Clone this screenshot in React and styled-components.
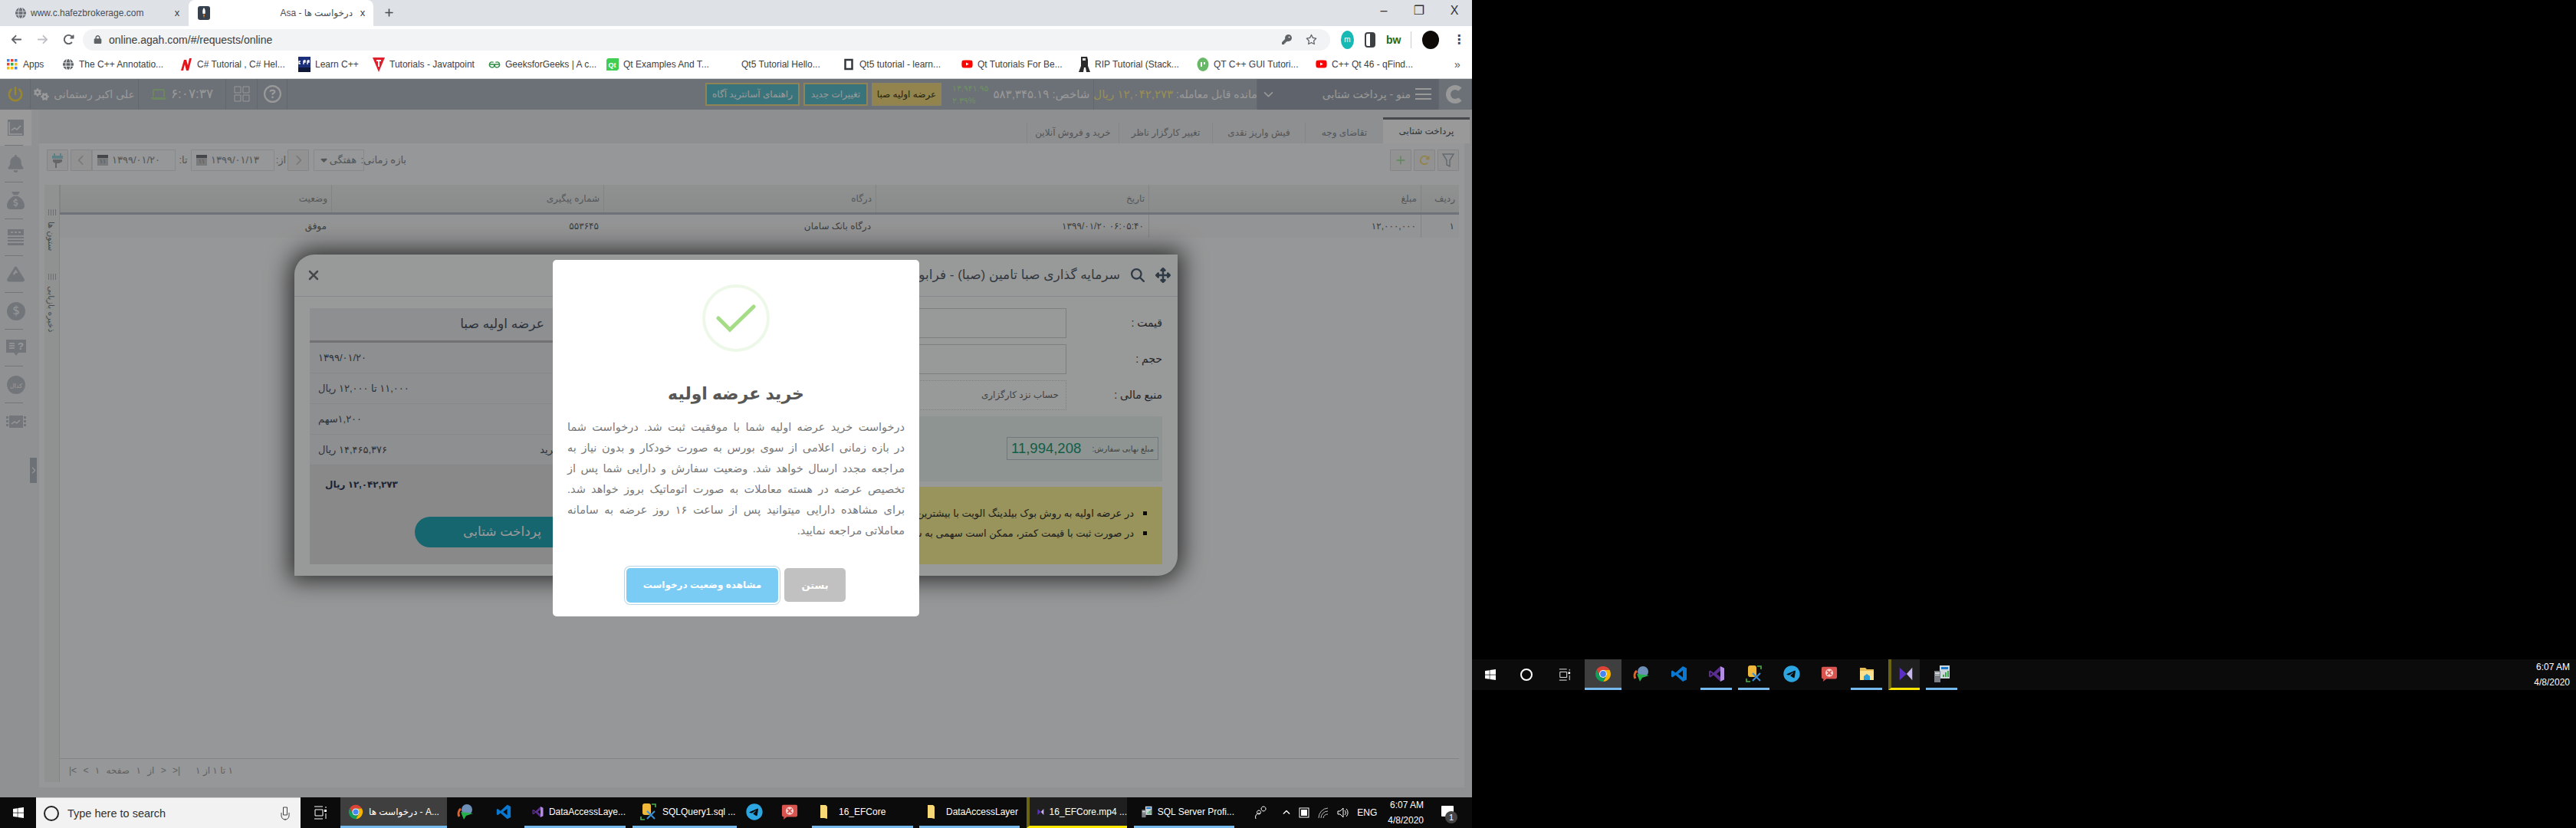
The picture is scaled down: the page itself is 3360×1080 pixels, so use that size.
import React from 'react';
import styled, {createGlobalStyle} from 'styled-components';
import {FaWindows, FaTelegram, FaBell, FaMountain, FaSackDollar, FaMagnifyingGlass, FaUpDownLeftRight, FaXmark, FaRegStar, FaKey, FaLock, FaArrowLeft, FaArrowRight, FaRotateRight, FaGlobe, FaYoutube, FaPlus, FaChevronLeft, FaChevronRight, FaChevronDown, FaChevronUp, FaPowerOff, FaGears, FaRegCircleQuestion, FaLaptop, FaCaretDown} from 'react-icons/fa6';

const GlobalStyle = createGlobalStyle`
  html, body { margin: 0; padding: 0; background: #000; overflow: hidden; }
  body { font-family: "Liberation Sans", "DejaVu Sans", sans-serif; }
  * { box-sizing: border-box; }
`;

/* ---- small drawings ---- */
const ChromeLogo = ({size = 20}) => (
    <svg width={size} height={size} viewBox="0 0 24 24">
        <path fill="#db4437" d="M12 7h8.66A10 10 0 0 0 3.34 7l4.33 7.5A5 5 0 0 1 12 7z"/>
        <path fill="#f4b400" d="M16.33 14.5A5 5 0 0 0 12 7h8.66A10 10 0 0 1 12 22z"/>
        <path fill="#0f9d58" d="M7.67 14.5L3.34 7A10 10 0 0 0 12 22l4.33-7.5a5 5 0 0 1-8.66 0z"/>
        <circle cx="12" cy="12" r="5" fill="#fff"/>
        <circle cx="12" cy="12" r="3.9" fill="#4285f4"/>
    </svg>
);
const VsLogo = ({size = 22}) => (
    <svg width={size} height={size} viewBox="0 0 24 24">
        <path fill="#5c2d91" d="M17 2L8 10.5 4 7.5 2 8.5v7l2 1 4-3 9 8.5z"/>
        <path fill="#b18de0" d="M17 2l5 2.5v15L17 22z"/>
        <path fill="#0b0b0b" d="M4 10l2.4 2L4 14zM17 8l-5 4 5 4z"/>
    </svg>
);
const VscodeLogo = ({size = 22}) => (
    <svg width={size} height={size} viewBox="0 0 24 24">
        <path fill="#0a78d1" d="M17 2l5 2.4v15.2L17 22 7.5 13.5l-4 3L2 15.5v-7l1.5-1 4 3zM17 7.5L11 12l6 4.5z"/>
    </svg>
);
const PlayerLogo = () => (
    <svg width="22" height="22" viewBox="0 0 24 24">
        <path fill="#5b2fc4" d="M3 3l10 9-10 9z"/>
        <path fill="#c9b6ee" d="M21 3l-8 9 8 9z"/>
    </svg>
);
const IdmLogo = () => (
    <svg width="24" height="24" viewBox="0 0 24 24">
        <path fill="none" stroke="#e2632a" strokeWidth="3" d="M4 18a8 8 0 0 1 2-10"/>
        <circle cx="14" cy="9" r="7" fill="#6d8fb8"/>
        <path fill="#26b04b" d="M6 12l16 2-9 3-3 5z"/>
    </svg>
);
const SsmsLogo = () => (
    <svg width="24" height="24" viewBox="0 0 24 24">
        <rect x="4" y="1" width="11" height="15" rx="3" fill="#f0b83a"/>
        <path stroke="#4caf50" strokeWidth="1.6" fill="none" d="M16 2h5v4M2 18v4h5"/>
        <path stroke="#3a8fd8" strokeWidth="2" d="M10 21l10-10M10 11l10 10"/>
    </svg>
);
const RedAppLogo = () => (
    <svg width="22" height="22" viewBox="0 0 24 24">
        <path fill="#d9534f" d="M3 2h18a2 2 0 0 1 2 2v13a2 2 0 0 1-2 2H8l-5 4 1-4H3a2 2 0 0 1-2-2V4a2 2 0 0 1 2-2z"/>
        <circle cx="12" cy="10.5" r="5.5" fill="#f6d5d3"/>
        <path stroke="#d9534f" strokeWidth="2" d="M9 7.500l6 6M15 7.500l-6 6"/>
    </svg>
);
const FolderLogo = ({tall}) => (
    <svg width="20" height="22" viewBox="0 0 20 22">
        {tall
            ? <path fill="#f8d775" d="M2 2h7l2 2v16l-4-1H2z"/>
            : <><path fill="#e8bd55" d="M1 3h7l2 2h9v14H1z"/><path fill="#fbe08e" d="M1 7h18v12H1z"/><path fill="#2c9fd9" d="M6 19v-5l4-3 4 3v5z"/></>}
    </svg>
);
const ProfilerLogo = () => (
    <svg width="24" height="24" viewBox="0 0 24 24">
        <rect x="9" y="1" width="13" height="17" fill="#cfd6dc"/>
        <path fill="#1e78c8" d="M11 3h9v3h-9z"/>
        <path fill="#3fa34d" d="M13 16v-3h2v3zM16 16v-6h2v6zM19 16V8h2v8z"/>
        <rect x="2" y="8" width="8" height="15" fill="#7a7f85"/>
        <path fill="#d8dcdf" d="M3 10h6v2H3zM3 13h6v1H3z"/>
    </svg>
);
const RocketIcon = () => (
    <svg width="16" height="18" viewBox="0 0 16 18">
        <rect width="16" height="18" rx="3" fill="#36414d"/>
        <path fill="#fff" d="M8 2c2 2 2 5 1.500 8h-3C6 7 6 4 8 2z"/>
        <path fill="#f08a24" d="M7 11h2l-1 5z"/>
    </svg>
);
const GridDots = () => (
    <svg width="14" height="14" viewBox="0 0 14 14">
        {[0, 5, 10].flatMap(y => [0, 5, 10].map(x => (
            <rect key={x + '-' + y} x={x} y={y} width="3.500" height="3.500"
                  fill={y === 0 ? (x === 5 ? '#ea4335' : '#4285f4') : y === 5 ? (x === 0 ? '#ea4335' : x === 5 ? '#34a853' : '#fbbc05') : (x === 10 ? '#4285f4' : '#fbbc05')}/>
        )))}
    </svg>
);
const CSharpIcon = () => (
    <svg width="16" height="18" viewBox="0 0 16 18"><path fill="#e3141c" d="M1 17L5 3h3l2 7 2-9h3l-4 16H8L6 9l-2 8z"/></svg>
);
const CppIcon = () => (
    <svg width="16" height="20" viewBox="0 0 16 20"><rect width="16" height="20" fill="#1b2f7a"/><rect y="14" width="16" height="6" fill="#10183a"/><path stroke="#fff" strokeWidth="1.400" fill="none" d="M3 6H1v3h2M7 5v5M7 5h2v2H7M12 5v5M12 5h2v2h-2"/></svg>
);
const JavatIcon = () => (
    <svg width="16" height="20" viewBox="0 0 16 20"><path fill="#e0202c" d="M0 1h16L8 20z"/><path fill="#fff" d="M5 4h6v2H9v7H7V6H5z"/></svg>
);
const GfgIcon = () => (
    <svg width="18" height="14" viewBox="0 0 18 14"><path fill="none" stroke="#2f8d46" strokeWidth="1.500" d="M9 7H1.500a4 4 0 0 1 6-3M9 7h7.500a4 4 0 0 0-6-3M1.500 7a4 4 0 0 0 7 3V7M16.500 7a4 4 0 0 1-7 3V7"/></svg>
);
const QtIcon = () => (
    <svg width="16" height="16" viewBox="0 0 16 16"><path fill="#41cd52" d="M2 0h14v14l-2 2H0V2z"/><text x="2.500" y="11.500" fontSize="9" fontFamily="Liberation Sans" fill="#fff" fontWeight="700">Qt</text></svg>
);
const BlackSquare = () => (
    <svg width="12" height="16" viewBox="0 0 12 16"><rect x="1.500" y="2" width="9" height="12" fill="#fff" stroke="#33383e" strokeWidth="2.500"/></svg>
);
const RipIcon = () => (
    <svg width="16" height="22" viewBox="0 0 16 22"><path fill="#2b2b2b" d="M4 1h8l1 4v8l3 8h-5l-1-6H8l-1 6H1l3-8V5z"/><path fill="#ddd" d="M6 3h4v3H6z"/></svg>
);
const QtGuiIcon = () => (
    <svg width="16" height="18" viewBox="0 0 16 18"><ellipse cx="8" cy="9" rx="7.500" ry="9" fill="#69b868"/><path fill="#fff" d="M5 6h2v6H5zM9 6h2v3H9z"/></svg>
);
const TrendIcon = () => (
    <svg width="21" height="21" viewBox="0 0 21 21"><rect width="21" height="21" fill="#bfc5cd"/><path fill="none" stroke="#fff" strokeWidth="1.500" d="M2 3v16h17M5 14l4-3 3 2 5-5"/></svg>
);
const ListIcon = () => (
    <svg width="21" height="21" viewBox="0 0 21 21"><rect width="21" height="21" fill="#bfc5cd"/><path stroke="#fff" strokeWidth="1.500" d="M0 9h21M0 13h21M0 17h21M4 4h3M9 4h3M14 4h3"/></svg>
);
const CoinIcon = ({label}) => (
    <svg width="24" height="24" viewBox="0 0 24 24">
        <circle cx="12" cy="12" r="12" fill="#bfc5cd"/>
        <text x="12" y="16" textAnchor="middle" fontSize={label.length > 1 ? 8 : 15} fontFamily="DejaVu Sans" fill="#fff">{label}</text>
    </svg>
);
const QuestionIcon = () => (
    <svg width="26" height="21" viewBox="0 0 26 21"><path fill="#bfc5cd" d="M0 0h26v17H16l-3 4-3-4H0z"/><path stroke="#fff" strokeWidth="1.300" d="M4 5h7M4 8h7M4 11h7"/><text x="15" y="13" fontSize="13" fontFamily="Liberation Sans" fontWeight="700" fill="#fff">?</text></svg>
);
const FilmIcon = () => (
    <svg width="26" height="16" viewBox="0 0 26 16"><rect x="4" width="18" height="16" fill="#bfc5cd"/><path fill="#bfc5cd" d="M0 1h3v3H0zM0 6h3v3H0zM0 11h3v3H0zM23 1h3v3h-3zM23 6h3v3h-3zM23 11h3v3h-3z"/><path fill="none" stroke="#fff" strokeWidth="1.300" d="M7 11l4-3 3 2 4-4"/></svg>
);
const PlugIcon = () => (
    <svg width="14" height="22" viewBox="0 0 14 22"><path fill="#9ed8de" d="M2 2h2v3h6V2h2v3h2v4H0V5h2z"/><path fill="#a8abae" d="M1 10h12v3l-4 2H6v6H4v-6l-3-2z"/></svg>
);
const FunnelIcon = () => (
    <svg width="16" height="18" viewBox="0 0 16 18"><path fill="none" stroke="#a8b0bb" strokeWidth="1.500" d="M1 1h14L10 9v8l-4-2V9z"/></svg>
);
const TaskViewIcon = ({size = 18}) => (
    <svg width={size} height={size} viewBox="0 0 18 18"><path fill="none" stroke="#fff" d="M1 1h11M1 17h11M2 5h10v8H2z"/><path fill="#fff" d="M14 5h3v3h-3z"/><path stroke="#fff" d="M16 10v7M16 1v2"/></svg>
);

/* ---- chrome ---- */
const Browser = styled.div`
  width: 1920px;
  height: 1080px;
  display: flex;
  flex-direction: column;
  flex-shrink: 0;
`;
const TabStrip = styled.div`
  height: 34px;
  background: #dee1e6;
  display: flex;
  align-items: stretch;
  color: #3c4043;
`;
const Tab = styled.div`
  width: ${p => p.$w}px;
  background: ${p => p.$active ? '#fff' : 'transparent'};
  border-radius: 8px 8px 0 0;
  display: flex;
  align-items: center;
  gap: 6px;
  padding: 0 7px 0 ${p => p.$active ? 12 : 20}px;
  font-size: 12px;
  margin-left: ${p => p.$active ? 1 : 0}px;
`;
const TabTitle = styled.span`
  flex: 1;
  text-align: ${p => p.$end ? 'right' : 'left'};
  white-space: nowrap;
  color: #4a4d52;
`;
const TabClose = styled.span`
  font-size: 13px;
  color: #3c4043;
  width: 14px;
  text-align: center;
`;
const NewTab = styled.div`
  width: 40px;
  display: flex;
  align-items: center;
  justify-content: center;
  color: #4a4d52;
  font-size: 13px;
`;
const WindowButtons = styled.div`
  margin-left: auto;
  display: flex;
  align-items: flex-start;
  padding: 6px 15px 0 0;
  gap: 30px;
  font-size: 16px;
  color: #333;
`;
const WinGlyph = styled.span`
  width: 16px;
  text-align: center;
  line-height: 16px;
`;
const AddressRow = styled.div`
  height: 32px;
  background: #fff;
  display: flex;
  align-items: flex-end;
  padding-left: 14px;
  color: #5f6368;
`;
const NavIcons = styled.div`
  display: flex;
  align-items: center;
  gap: 19px;
  height: 28px;
  width: 94px;
  font-size: 15px;
`;
const Omnibox = styled.div`
  width: 1627px;
  height: 28px;
  background: #f1f3f4;
  border-radius: 14px;
  display: flex;
  align-items: center;
  padding: 0 17px 0 14px;
  gap: 9px;
  font-size: 14px;
  color: #3c4043;
`;
const UrlText = styled.span`
  flex: 1;
  white-space: nowrap;
`;
const OmniTools = styled.div`
  display: flex;
  align-items: center;
  gap: 18px;
  color: #5f6368;
  font-size: 14px;
`;
const ExtensionTools = styled.div`
  display: flex;
  align-items: center;
  height: 28px;
  padding-left: 14px;
  gap: 14px;
`;
const ExtM = styled.span`
  width: 17px;
  height: 24px;
  border-radius: 50%;
  background: #17b9b4;
  color: #fff;
  font-size: 10px;
  display: flex;
  align-items: center;
  justify-content: center;
`;
const ExtBox = styled.span`
  width: 14px;
  height: 20px;
  border: 2px solid #3c4043;
  border-radius: 4px;
  background: linear-gradient(90deg, #fff 50%, #3c4043 50%);
`;
const ExtBw = styled.span`
  font-size: 14px;
  font-weight: 700;
  color: #1c6b16;
  width: 18px;
`;
const ExtSeparator = styled.span`
  width: 1px;
  height: 22px;
  background: #ccc;
`;
const Avatar = styled.span`
  width: 22px;
  height: 24px;
  border-radius: 50%;
  background: #0d0a08;
`;
const Dots = styled.span`
  font-size: 16px;
  font-weight: 700;
  color: #444;
  margin-left: 4px;
`;
const BookmarkBar = styled.div`
  height: 37px;
  background: #fff;
  border-bottom: 1px solid #d6d6d6;
  display: flex;
  align-items: center;
  padding-left: 8px;
  font-size: 12px;
  color: #3c4043;
`;
const Bookmark = styled.div`
  width: ${p => p.$w}px;
  display: flex;
  align-items: center;
  gap: 6px;
  overflow: hidden;
  white-space: nowrap;
`;
const BookmarkIcon = styled.span`
  width: 16px;
  height: 22px;
  display: flex;
  align-items: center;
  justify-content: center;
  flex-shrink: 0;
`;
const MoreBookmarks = styled.span`
  margin-left: 20px;
  font-size: 14px;
  color: #555;
`;

/* ---- page behind the dialogs ---- */
const AppArea = styled.div`
  position: relative;
  height: 938px;
  overflow: hidden;
  background: #f0f2f3;
  display: flex;
  flex-direction: column;
`;
const Backdrop = styled.div`
  position: absolute;
  inset: 0;
  background: rgba(0, 0, 0, .4);
  z-index: 2;
`;
const HeaderBar = styled.div`
  height: 40px;
  background: #b4bbc6;
  display: flex;
  align-items: stretch;
  color: #fff;
`;
const HeaderCell = styled.div`
  width: ${p => p.$w}px;
  display: flex;
  align-items: center;
  justify-content: ${p => p.$spread ? 'space-between' : 'center'};
  gap: 6px;
  padding: ${p => p.$spread ? '0 9px 0 8px' : '0'};
  border-right: 1px solid #a5acb8;
  font-size: ${p => p.$size || 14}px;
  background: ${p => p.$dark ? '#9ea7b4' : 'transparent'};
  white-space: nowrap;
`;
const HeaderSpacer = styled.div`
  flex: 1;
`;
const HeaderButtons = styled.div`
  display: flex;
  align-items: center;
  gap: 5px;
  margin-right: 6px;
`;
const NoticeButton = styled.div`
  width: ${p => p.$w}px;
  height: 30px;
  background: ${p => p.$gold ? '#f3dd7f' : '#5fc2d0'};
  border: 2px solid #f0dc90;
  font-size: 12px;
  color: ${p => p.$gold ? '#3f3a20' : '#fff'};
  display: flex;
  align-items: center;
  justify-content: center;
  white-space: nowrap;
  overflow: hidden;
`;
const IndexStack = styled.div`
  color: #b4f0a0;
  font-size: 11px;
  line-height: 16px;
  direction: ltr;
`;
const BalanceValue = styled.span`
  color: #ffee8a;
  font-size: 15px;
`;
const HamburgerLines = styled.span`
  width: 21px;
  height: 15px;
  border-top: 2px solid #fff;
  border-bottom: 2px solid #fff;
  position: relative;
  &::after {
    content: "";
    position: absolute;
    left: 0;
    right: 0;
    top: 4.500px;
    height: 2px;
    background: #fff;
  }
`;
const LogoMark = styled.span`
  width: 24px;
  height: 24px;
  border-radius: 50%;
  border: 6px solid #fff;
  border-right-color: transparent;
`;
const Workspace = styled.div`
  flex: 1;
  display: flex;
  min-height: 0;
`;
const SideMenu = styled.div`
  width: 41px;
  display: flex;
  flex-direction: column;
  align-items: stretch;
  position: relative;
`;
const SideItem = styled.div`
  height: ${p => p.$first ? 47 : 48}px;
  background: ${p => p.$first ? '#fff' : 'transparent'};
  display: flex;
  align-items: center;
  justify-content: center;
  color: #bfc5cd;
  font-size: 23px;
  position: relative;
  &::after {
    content: "";
    position: absolute;
    left: 6px;
    right: 11px;
    bottom: 0;
    height: 1px;
    background: ${p => p.$last ? 'transparent' : '#c0c3c6'};
  }
`;
const SideToggle = styled.div`
  position: absolute;
  left: 39px;
  top: 454px;
  width: 9px;
  height: 33px;
  background: #b4bbc6;
  color: #fff;
  font-size: 9px;
  display: flex;
  align-items: center;
  justify-content: center;
  z-index: 1;
`;
const MainColumn = styled.div`
  flex: 1;
  padding: 0 10px 13px 10px;
  display: flex;
  flex-direction: column;
  min-width: 0;
`;
const TabBar = styled.div`
  height: 44px;
  display: flex;
  direction: rtl;
  margin-right: -7px;
  align-items: flex-end;
  font-size: 12px;
  background: #edeef2;
`;
const PageTab = styled.div`
  width: ${p => p.$w}px;
  height: ${p => p.$active ? 34 : 27}px;
  display: flex;
  align-items: center;
  justify-content: center;
  color: #8b8e92;
  border-top: ${p => p.$active ? '3px solid #777a7f' : 'none'};
  border-left: ${p => p.$active ? 'none' : '1px solid #dde0e3'};
  background: ${p => p.$active ? '#fff' : 'transparent'};
  ${p => p.$active && 'color: #555a60;'}
  white-space: nowrap;
`;
const MainBox = styled.div`
  flex: 1;
  background: #fafcfd;
  padding: 8px 7px 7px;
  display: flex;
  flex-direction: column;
  min-height: 0;
`;
const FilterBar = styled.div`
  height: 28px;
  display: flex;
  align-items: center;
  font-size: 13px;
  color: #8c8f93;
  margin-bottom: 18px;
  white-space: nowrap;
`;
const ToolButton = styled.div`
  width: ${p => p.$w || 28}px;
  height: 28px;
  margin-left: ${p => p.$gap || 0}px;
  border: 1px solid #dcdee1;
  background: #f3f4f5;
  border-radius: 1px;
  display: flex;
  align-items: center;
  justify-content: center;
  color: ${p => p.$color || '#c5c8cb'};
  font-size: 14px;
`;
const DateField = styled.div`
  width: 109px;
  height: 28px;
  margin-left: ${p => p.$gap || 0}px;
  border: 1px solid #e2e4e6;
  display: flex;
  align-items: center;
  gap: 5px;
  padding-left: 6px;
  font-size: 13px;
  color: #8c8f93;
`;
const CalendarGlyph = styled.span`
  width: 14px;
  height: 14px;
  background: #c9cbcd;
  border-top: 4px solid #73767b;
  font-size: 8px;
  line-height: 10px;
  text-align: center;
`;
const FilterLabel = styled.span`
  width: ${p => p.$w}px;
  margin-left: ${p => p.$gap || 0}px;
  direction: rtl;
  text-align: center;
`;
const SelectBox = styled.div`
  width: 66px;
  height: 28px;
  margin-left: 6px;
  border: 1px solid #e2e4e6;
  display: flex;
  align-items: center;
  justify-content: space-between;
  padding: 0 9px 0 6px;
  font-size: 13px;
`;
const RightTools = styled.div`
  margin-left: auto;
  display: flex;
  gap: 3px;
`;
const GridArea = styled.div`
  flex: 1;
  display: flex;
  min-height: 0;
`;
const GridRail = styled.div`
  width: 20px;
  background: #eef3f2;
  border-right: 1px solid #dcdfe0;
  display: flex;
  flex-direction: column;
  align-items: center;
  padding-top: 32px;
  color: #7e7f83;
  font-size: 11px;
`;
const RailGrip = styled.span`
  width: 10px;
  height: 8px;
  margin-top: ${p => p.$gap || 0}px;
  background: repeating-linear-gradient(90deg, #b5b8ba 0 1px, transparent 1px 3px);
`;
const RailText = styled.span`
  writing-mode: vertical-rl;
  direction: rtl;
  margin-top: 8px;
  white-space: nowrap;
`;
const GridBody = styled.div`
  flex: 1;
  display: flex;
  flex-direction: column;
  direction: rtl;
  min-width: 0;
`;
const GridHead = styled.div`
  height: 39px;
  display: grid;
  grid-template-columns: 50px 355px 356px 355px 355px 1fr;
  border-bottom: 3px solid #b9bec8;
  background: linear-gradient(#f0f2f2, #e6e9e9);
`;
const GridRow = styled.div`
  height: 30px;
  display: grid;
  grid-template-columns: 50px 355px 356px 355px 355px 1fr;
  background: #f6f7f8;
  font-size: 12px;
`;
const HeadCell = styled.div`
  display: flex;
  align-items: center;
  padding-right: 5px;
  font-size: 12px;
  color: #8f9296;
  border-left: 1px solid #d8dbdd;
`;
const RowCell = styled.div`
  display: flex;
  align-items: center;
  padding-right: 6px;
  color: #65686c;
  border-left: 1px solid ${p => p.$line ? '#d8dbdd' : 'transparent'};
`;
const GridFill = styled.div`
  flex: 1;
  border-bottom: 1px solid #d8dbdd;
`;
const Pager = styled.div`
  height: 30px;
  direction: ltr;
  display: flex;
  align-items: center;
  padding-left: 12px;
  gap: 20px;
  font-size: 12px;
  color: #a0a3a6;
`;
const PagerLinks = styled.span`
  word-spacing: 5px;
  white-space: nowrap;
`;

/* ---- trade window ---- */
const TradeWindow = styled.div`
  position: absolute;
  left: 384px;
  top: 229px;
  width: 1152px;
  height: 419px;
  background: #fdffff;
  border-radius: 26px 0 26px 0;
  box-shadow: 0 0 30px 6px rgba(0, 0, 0, .7);
  direction: rtl;
  display: flex;
  flex-direction: column;
  z-index: 1;
  overflow: hidden;
`;
const TradeHeader = styled.div`
  height: 55px;
  border-bottom: 1px solid #e1e3ee;
  display: flex;
  align-items: center;
  padding: 0 9px 0 15px;
  gap: 14px;
  color: #4e6175;
  font-size: 17px;
`;
const TradeTitle = styled.span`
  flex: 1;
  font-size: 17px;
  color: #56606c;
`;
const TradeClose = styled.span`
  color: #77797c;
  font-size: 20px;
  display: flex;
`;
const TradeBody = styled.div`
  flex: 1;
  display: flex;
  padding: 15px 20px;
  gap: 10px;
  min-height: 0;
`;
const OrderForm = styled.div`
  width: 600px;
  display: flex;
  flex-direction: column;
`;
const FieldRow = styled.div`
  height: 39px;
  margin-bottom: 8px;
  display: flex;
  align-items: center;
`;
const FieldLabel = styled.label`
  width: 125px;
  font-size: 14px;
  color: #3a3f45;
`;
const FieldBox = styled.div`
  flex: 1;
  height: 39px;
  border: 1px ${p => p.$dotted ? 'dotted' : 'solid'} #d3d3d6;
  display: flex;
  align-items: center;
  padding-right: 9px;
  font-size: 12px;
  color: #6d7075;
`;
const TotalBand = styled.div`
  height: 85px;
  background: #ebf7f2;
  display: flex;
  align-items: center;
  padding-right: 5px;
  margin-bottom: 7px;
`;
const TotalBox = styled.div`
  width: 198px;
  height: 30px;
  border: 1px solid #c0c6d0;
  display: flex;
  align-items: center;
  justify-content: space-between;
  padding: 0 5px;
  font-size: 10px;
  color: #6d7075;
  white-space: nowrap;
`;
const TotalValue = styled.span`
  font-family: "Liberation Sans", sans-serif;
  font-size: 18.500px;
  color: #1f9c78;
`;
const WarningBand = styled.ul`
  flex: 1;
  margin: 0;
  background: #fff599;
  list-style: none;
  padding: 22px 20px 0 0;
  font-size: 13px;
  color: #333;
`;
const WarningItem = styled.li`
  display: flex;
  align-items: center;
  gap: 12px;
  height: 26px;
  white-space: nowrap;
  &::before {
    content: "";
    width: 5px;
    height: 5px;
    background: #111;
  }
`;
const OfferPanel = styled.div`
  flex: 1;
  background: #edeef0;
  display: flex;
  flex-direction: column;
`;
const OfferTitle = styled.div`
  height: 45px;
  border-bottom: 3px solid #bcbdc2;
  display: flex;
  align-items: center;
  justify-content: center;
  font-size: 17px;
  color: #4b5565;
`;
const OfferRow = styled.div`
  height: 40px;
  border-bottom: 1px solid #e2e3e5;
  display: flex;
  align-items: center;
  justify-content: space-between;
  padding: 0 11px;
  font-size: 13px;
  color: #4b5565;
`;
const OfferFooter = styled.div`
  flex: 1;
  background: #e4e5e7;
  display: flex;
  flex-direction: column;
  align-items: center;
  padding-top: 18px;
`;
const OfferTotal = styled.div`
  width: 100%;
  text-align: left;
  padding-left: 20px;
  font-size: 12px;
  font-weight: 700;
  color: #2c3a55;
`;
const PayButton = styled.div`
  width: 228px;
  height: 40px;
  margin-top: 35px;
  border-radius: 20px;
  background: #26aab9;
  color: #fff;
  font-size: 17px;
  display: flex;
  align-items: center;
  justify-content: center;
`;

/* ---- success alert ---- */
const AlertBox = styled.div`
  position: absolute;
  left: 721px;
  top: 236px;
  width: 478px;
  height: 465px;
  background: #fff;
  border-radius: 5px;
  z-index: 3;
  direction: rtl;
  display: flex;
  flex-direction: column;
  align-items: center;
  padding: 32px 19px 0;
`;
const SuccessRing = styled.div`
  width: 88px;
  height: 88px;
  border: 4px solid #eef8e9;
  border-radius: 50%;
  display: flex;
  align-items: center;
  justify-content: center;
  flex-shrink: 0;
`;
const AlertTitle = styled.h2`
  margin: 35px 0 10px;
  font-size: 22px;
  line-height: 40px;
  font-weight: 700;
  color: #575757;
`;
const AlertText = styled.div`
  width: 100%;
  font-size: 14.500px;
  line-height: 27px;
  color: #797979;
`;
const AlertLine = styled.div`
  white-space: nowrap;
  text-align: justify;
  text-align-last: ${p => p.$last ? 'right' : 'justify'};
`;
const AlertActions = styled.div`
  display: flex;
  gap: 8px;
  direction: ltr;
  margin-top: 35px;
  align-items: center;
`;
const ConfirmButton = styled.button`
  width: 198px;
  height: 45px;
  border: none;
  border-radius: 5px;
  background: #7accf5;
  box-shadow: 0 0 0 2px #fff, 0 0 0 3px #bcd6e8;
  color: #fff;
  font: 700 12px "Liberation Sans", "DejaVu Sans", sans-serif;
`;
const CancelButton = styled.button`
  width: 80px;
  height: 44px;
  border: none;
  border-radius: 5px;
  background: #c1c1c1;
  color: #fff;
  font: 700 13px "Liberation Sans", "DejaVu Sans", sans-serif;
`;

/* ---- taskbars ---- */
const Taskbar = styled.div`
  height: 40px;
  background: #0b0b0b;
  display: flex;
  align-items: stretch;
  color: #fff;
  font-size: 12px;
`;
const StartButton = styled.div`
  width: ${p => p.$w}px;
  display: flex;
  align-items: center;
  justify-content: center;
  font-size: ${p => p.$size || 16}px;
  flex-shrink: 0;
`;
const SearchBox = styled.div`
  width: 345px;
  background: #f2f2f2;
  border-top: 1px solid #ccc;
  display: flex;
  align-items: center;
  padding: 0 14px 0 10px;
  gap: 11px;
  color: #333;
  font-size: 14.500px;
`;
const SearchHint = styled.span`
  flex: 1;
`;
const CortanaRing = styled.span`
  width: ${p => p.$size}px;
  height: ${p => p.$size}px;
  border: 2.500px solid ${p => p.$light ? '#fff' : '#222'};
  border-radius: 50%;
`;
const TaskItem = styled.div`
  width: ${p => p.$w}px;
  margin-right: ${p => p.$gap || 0}px;
  display: flex;
  align-items: center;
  justify-content: ${p => p.$center ? 'center' : 'flex-start'};
  gap: 6px;
  padding-left: ${p => p.$center ? 0 : 9}px;
  white-space: nowrap;
  overflow: hidden;
  flex-shrink: 0;
  background: ${p => p.$active ? '#3f3f3f' : p.$playing ? '#1f1f1f' : 'transparent'};
  border-bottom: ${p => p.$mark ? `3px solid ${p.$mark}` : '3px solid transparent'};
  border-left: ${p => p.$playing ? '4px solid #6b6412' : 'none'};
`;
const TrayArea = styled.div`
  margin-left: auto;
  display: flex;
  align-items: center;
  gap: 11px;
  padding-right: 8px;
  font-size: 12px;
`;
const PeopleGlyph = styled.svg`
  margin-right: 9px;
`;
const ClockText = styled.div`
  text-align: right;
  line-height: 20px;
  font-size: 12px;
  white-space: nowrap;
  margin-left: 3px;
`;
const NotifyBadge = styled.span`
  position: relative;
  width: 16px;
  height: 14px;
  background: #fff;
  border-radius: 1px;
  margin: 0 16px 4px 12px;
  &::after {
    content: "1";
    position: absolute;
    left: 5px;
    top: 7px;
    width: 16px;
    height: 16px;
    border-radius: 50%;
    background: #444;
    color: #fff;
    font-size: 11px;
    line-height: 16px;
    text-align: center;
  }
`;
const SecondScreen = styled.div`
  width: 1440px;
  height: 1080px;
  background: #000;
  padding-top: 860px;
  flex-shrink: 0;
`;
const Wide = styled.div`
  display: flex;
  width: 3360px;
  height: 1080px;
`;
const SlotItem = styled.div`
  width: 49px;
  padding: 0 ${p => p.$flush ? '1px 0 0' : '4px'};
  display: flex;
`;
const SlotInner = styled.div`
  flex: 1;
  display: flex;
  align-items: center;
  justify-content: center;
  background: ${p => p.$active ? '#3f3f3f' : p.$playing ? '#1f1f1f' : 'transparent'};
  border-bottom: 3px solid ${p => p.$mark || 'transparent'};
  border-left: ${p => p.$playing ? '4px solid #6b6412' : 'none'};
`;

const bookmarks = [
    [73, <GridDots/>, 'Apps'],
    [154, <FaGlobe color="#5f6368" size={14}/>, 'The C++ Annotatio...'],
    [154, <CSharpIcon/>, 'C# Tutorial , C# Hel...'],
    [97, <CppIcon/>, 'Learn C++'],
    [151, <JavatIcon/>, 'Tutorials - Javatpoint'],
    [154, <GfgIcon/>, 'GeeksforGeeks | A c...'],
    [154, <QtIcon/>, 'Qt Examples And T...'],
    [154, null, 'Qt5 Tutorial Hello...'],
    [154, <BlackSquare/>, 'Qt5 tutorial - learn...'],
    [153, <FaYoutube color="#f00" size={15}/>, 'Qt Tutorials For Be...'],
    [155, <RipIcon/>, 'RIP Tutorial (Stack...'],
    [154, <QtGuiIcon/>, 'QT C++ GUI Tutori...'],
    [162, <FaYoutube color="#f00" size={15}/>, 'C++ Qt 46 - qFind...'],
];

const sideIcons = [
    <TrendIcon/>, <FaBell/>, <FaSackDollar/>, <ListIcon/>, <FaMountain/>,
    <CoinIcon label="$"/>, <QuestionIcon/>, <CoinIcon label="کدال"/>, <FilmIcon/>,
];

const pageTabs = [
    [113, 'پرداخت شتابی', true],
    [102, 'تقاضای وجه'],
    [121, 'فیش واریز نقدی'],
    [122, 'تغییر کارگزار ناظر'],
    [120, 'خرید و فروش آنلاین'],
];

const tasks = [
    {w: 139, icon: <ChromeLogo size={22}/>, label: 'درخواست ها - A...', active: true, mark: '#76b9ed'},
    {w: 47, icon: <IdmLogo/>, center: true},
    {w: 54, icon: <VscodeLogo/>, center: true},
    {w: 132, icon: <VsLogo size={24}/>, label: 'DataAccessLaye...', mark: '#76b9ed', gap: 9},
    {w: 136, icon: <SsmsLogo/>, label: 'SQLQuery1.sql ...', mark: '#76b9ed'},
    {w: 46, icon: <FaTelegram color="#2ca5e0" size={22}/>, center: true},
    {w: 46, icon: <RedAppLogo/>, center: true, gap: 6},
    {w: 132, icon: <FolderLogo tall/>, label: '16_EFCore', mark: '#76b9ed', gap: 8},
    {w: 131, icon: <FolderLogo tall/>, label: 'DataAccessLayer', mark: '#76b9ed', gap: 9},
    {w: 131, icon: <PlayerLogo/>, label: '16_EFCore.mp4 ...', playing: true, mark: '#ffe600', gap: 9},
    {w: 131, icon: <ProfilerLogo/>, label: 'SQL Server Profi...', mark: '#76b9ed'},
];

const slots = [
    {icon: <ChromeLogo size={24}/>, active: true, mark: '#76b9ed', flush: true},
    {icon: <IdmLogo/>},
    {icon: <VscodeLogo size={24}/>},
    {icon: <VsLogo size={24}/>, mark: '#76b9ed'},
    {icon: <SsmsLogo/>, mark: '#76b9ed'},
    {icon: <FaTelegram color="#2ca5e0" size={22}/>},
    {icon: <RedAppLogo/>},
    {icon: <FolderLogo/>, mark: '#76b9ed'},
    {icon: <PlayerLogo/>, playing: true, mark: '#ffe600'},
    {icon: <ProfilerLogo/>, mark: '#76b9ed'},
];

function App() {
    return (
        <Wide>
            <GlobalStyle/>
            <Browser>
                <TabStrip>
                    <Tab $w={245}>
                        <FaGlobe color="#6b6f75" size={14}/>
                        <TabTitle>www.c.hafezbrokerage.com</TabTitle>
                        <TabClose>x</TabClose>
                    </Tab>
                    <Tab $w={241} $active>
                        <RocketIcon/>
                        <TabTitle $end>Asa - درخواست ها</TabTitle>
                        <TabClose>x</TabClose>
                    </Tab>
                    <NewTab><FaPlus/></NewTab>
                    <WindowButtons>
                        <WinGlyph>–</WinGlyph>
                        <WinGlyph>❐</WinGlyph>
                        <WinGlyph>X</WinGlyph>
                    </WindowButtons>
                </TabStrip>
                <AddressRow>
                    <NavIcons>
                        <FaArrowLeft/>
                        <FaArrowRight color="#bdc1c6"/>
                        <FaRotateRight/>
                    </NavIcons>
                    <Omnibox>
                        <FaLock size={11} color="#5f6368"/>
                        <UrlText>online.agah.com/#/requests/online</UrlText>
                        <OmniTools>
                            <FaKey size={13}/>
                            <FaRegStar size={15}/>
                        </OmniTools>
                    </Omnibox>
                    <ExtensionTools>
                        <ExtM>m</ExtM>
                        <ExtBox/>
                        <ExtBw>bw</ExtBw>
                        <ExtSeparator/>
                        <Avatar/>
                        <Dots>⋮</Dots>
                    </ExtensionTools>
                </AddressRow>
                <BookmarkBar>
                    {bookmarks.map(([w, icon, label]) => (
                        <Bookmark key={label} $w={w}>
                            <BookmarkIcon>{icon}</BookmarkIcon>
                            <span>{label}</span>
                        </Bookmark>
                    ))}
                    <MoreBookmarks>»</MoreBookmarks>
                </BookmarkBar>
                <AppArea>
                    <HeaderBar>
                        <HeaderCell $w={40} $size={20}><FaPowerOff color="#ffe14d"/></HeaderCell>
                        <HeaderCell $w={141}><FaGears size={20}/><span>علی اکبر رستمانی</span></HeaderCell>
                        <HeaderCell $w={114} $size={17}><FaLaptop color="#b5e0a0" size={20}/><span>۶:۰۷:۳۷</span></HeaderCell>
                        <HeaderCell $w={41}>
                            <svg width="21" height="21" viewBox="0 0 21 21"><path fill="none" stroke="#fff" d="M1 1h8v8H1zM12 1h8v8h-8zM1 12h8v8H1zM12 12h8v8h-8z"/></svg>
                        </HeaderCell>
                        <HeaderCell $w={39} $size={23}><FaRegCircleQuestion/></HeaderCell>
                        <HeaderSpacer/>
                        <HeaderButtons>
                            <NoticeButton $w={123}>راهنمای آسانترید آگاه</NoticeButton>
                            <NoticeButton $w={84}>تغییرات جدید</NoticeButton>
                            <NoticeButton $w={91} $gold>عرضه اولیه صبا</NoticeButton>
                        </HeaderButtons>
                        <HeaderCell $w={193} $size={15} $spread>
                            <IndexStack>۱۳,۹۴۱.۹۵<br/>۲.۳۹%</IndexStack>
                            <span dir="rtl">شاخص: ۵۸۳,۳۴۵.۱۹</span>
                        </HeaderCell>
                        <HeaderCell $w={213} $size={14}>
                            <span dir="rtl">مانده قابل معامله: <BalanceValue>۱۲,۰۴۲,۲۷۳ ریال</BalanceValue></span>
                        </HeaderCell>
                        <HeaderCell $w={237} $dark $spread>
                            <FaChevronDown size={13}/>
                            <HeaderSpacer/>
                            <span dir="rtl">منو - پرداخت شتابی</span>
                            <HamburgerLines/>
                        </HeaderCell>
                        <HeaderCell $w={43}><LogoMark/></HeaderCell>
                    </HeaderBar>
                    <Workspace>
                        <SideMenu>
                            {sideIcons.map((icon, i) => (
                                <SideItem key={i} $first={i === 0} $last={i === sideIcons.length - 1}>{icon}</SideItem>
                            ))}
                            <SideToggle><FaChevronRight/></SideToggle>
                        </SideMenu>
                        <MainColumn>
                            <TabBar>
                                {pageTabs.map(([w, label, active]) => (
                                    <PageTab key={label} $w={w} $active={active}>{label}</PageTab>
                                ))}
                            </TabBar>
                            <MainBox>
                                <FilterBar>
                                    <ToolButton $gap={3}><PlugIcon/></ToolButton>
                                    <ToolButton $gap={3}><FaChevronLeft/></ToolButton>
                                    <DateField><CalendarGlyph>۱۱</CalendarGlyph>۱۳۹۹/۰۱/۲۰</DateField>
                                    <FilterLabel $w={20}>تا:</FilterLabel>
                                    <DateField><CalendarGlyph>۱۱</CalendarGlyph>۱۳۹۹/۰۱/۱۳</DateField>
                                    <FilterLabel $w={17}>از:</FilterLabel>
                                    <ToolButton><FaChevronRight/></ToolButton>
                                    <SelectBox><FaCaretDown/><span>هفتگی</span></SelectBox>
                                    <FilterLabel $w={52} $gap={3}>بازه زمانی:</FilterLabel>
                                    <RightTools>
                                        <ToolButton $color="#a5e6a0"><FaPlus/></ToolButton>
                                        <ToolButton $color="#f4dc78"><FaRotateRight/></ToolButton>
                                        <ToolButton><FunnelIcon/></ToolButton>
                                    </RightTools>
                                </FilterBar>
                                <GridArea>
                                    <GridRail>
                                        <RailGrip/>
                                        <RailText>ستون ها</RailText>
                                        <RailGrip $gap={30}/>
                                        <RailText>ذخیره بازیابی</RailText>
                                    </GridRail>
                                    <GridBody>
                                        <GridHead>
                                            {['ردیف', 'مبلغ', 'تاریخ', 'درگاه', 'شماره پیگیری', 'وضعیت'].map(t => (
                                                <HeadCell key={t}>{t}</HeadCell>
                                            ))}
                                        </GridHead>
                                        <GridRow>
                                            <RowCell $line>۱</RowCell>
                                            <RowCell $line>۱۲,۰۰۰,۰۰۰</RowCell>
                                            <RowCell><span dir="ltr">۱۳۹۹/۰۱/۲۰ ۰۶:۰۵:۴۰</span></RowCell>
                                            <RowCell>درگاه بانک سامان</RowCell>
                                            <RowCell>۵۵۳۶۴۵</RowCell>
                                            <RowCell>موفق</RowCell>
                                        </GridRow>
                                        <GridFill/>
                                        <Pager>
                                            <PagerLinks>|&lt; &lt; ۱ از ۱ صفحه &gt; &gt;|</PagerLinks>
                                            <span dir="rtl">۱ تا ۱ از ۱</span>
                                        </Pager>
                                    </GridBody>
                                </GridArea>
                            </MainBox>
                        </MainColumn>
                    </Workspace>
                    <TradeWindow>
                        <TradeHeader>
                            <FaUpDownLeftRight size={20}/>
                            <FaMagnifyingGlass size={18}/>
                            <TradeTitle>سرمایه گذاری صبا تامین (صبا) - فرابورس</TradeTitle>
                            <TradeClose><FaXmark/></TradeClose>
                        </TradeHeader>
                        <TradeBody>
                            <OrderForm>
                                <FieldRow><FieldLabel>قیمت :</FieldLabel><FieldBox/></FieldRow>
                                <FieldRow><FieldLabel>حجم :</FieldLabel><FieldBox/></FieldRow>
                                <FieldRow><FieldLabel>منبع مالی :</FieldLabel><FieldBox $dotted>حساب نزد کارگزاری</FieldBox></FieldRow>
                                <TotalBand>
                                    <TotalBox>
                                        <span>مبلغ نهایی سفارش:</span>
                                        <TotalValue>11,994,208</TotalValue>
                                    </TotalBox>
                                </TotalBand>
                                <WarningBand>
                                    <WarningItem>در عرضه اولیه به روش بوک بیلدینگ الویت با بیشترین قیمت است</WarningItem>
                                    <WarningItem>در صورت ثبت با قیمت کمتر، ممکن است سهمی به شما تعلق نگیرد</WarningItem>
                                </WarningBand>
                            </OrderForm>
                            <OfferPanel>
                                <OfferTitle>عرضه اولیه صبا</OfferTitle>
                                <OfferRow><span>تاریخ عرضه</span><span>۱۳۹۹/۰۱/۲۰</span></OfferRow>
                                <OfferRow><span>بازه قیمت</span><span>۱۱,۰۰۰ تا ۱۲,۰۰۰ ریال</span></OfferRow>
                                <OfferRow><span>حجم</span><span>۱,۲۰۰سهم</span></OfferRow>
                                <OfferRow><span>حداکثر مبلغ قابل پرداخت برای خرید</span><span>۱۴,۴۶۵,۳۷۶ ریال</span></OfferRow>
                                <OfferFooter>
                                    <OfferTotal>۱۲,۰۴۲,۲۷۳ ریال</OfferTotal>
                                    <PayButton>پرداخت شتابی</PayButton>
                                </OfferFooter>
                            </OfferPanel>
                        </TradeBody>
                    </TradeWindow>
                    <Backdrop/>
                    <AlertBox>
                        <SuccessRing>
                            <svg width="52" height="38" viewBox="0 0 52 38">
                                <path fill="none" stroke="#a5dc86" strokeWidth="5" strokeLinecap="round" d="M3 19l15 15L49 4"/>
                            </svg>
                        </SuccessRing>
                        <AlertTitle>خرید عرضه اولیه</AlertTitle>
                        <AlertText>
                            <AlertLine>درخواست خرید عرضه اولیه شما با موفقیت ثبت شد. درخواست شما</AlertLine>
                            <AlertLine>در بازه زمانی اعلامی از سوی بورس به صورت خودکار و بدون نیاز به</AlertLine>
                            <AlertLine>مراجعه مجدد ارسال خواهد شد. وضعیت سفارش و دارایی شما پس از</AlertLine>
                            <AlertLine>تخصیص عرضه در هسته معاملات به صورت اتوماتیک بروز خواهد شد.</AlertLine>
                            <AlertLine>برای مشاهده دارایی میتوانید پس از ساعت ۱۶ روز عرضه به سامانه</AlertLine>
                            <AlertLine $last>معاملاتی مراجعه نمایید.</AlertLine>
                        </AlertText>
                        <AlertActions>
                            <ConfirmButton>مشاهده وضعیت درخواست</ConfirmButton>
                            <CancelButton>بستن</CancelButton>
                        </AlertActions>
                    </AlertBox>
                </AppArea>
                <Taskbar>
                    <StartButton $w={47}><FaWindows/></StartButton>
                    <SearchBox>
                        <CortanaRing $size={20}/>
                        <SearchHint>Type here to search</SearchHint>
                        <svg width="12" height="18" viewBox="0 0 12 18"><path fill="none" stroke="#444" d="M3.500 1h5v10h-5zM1 8v4a4 4 0 0 0 10 0V8M6 16v2"/></svg>
                    </SearchBox>
                    <StartButton $w={52}><TaskViewIcon/></StartButton>
                    {tasks.map((t, i) => (
                        <TaskItem key={i} $w={t.w} $center={t.center} $active={t.active} $playing={t.playing} $mark={t.mark} $gap={t.gap}>
                            {t.icon}
                            {t.label && <span>{t.label}</span>}
                        </TaskItem>
                    ))}
                    <TrayArea>
                        <PeopleGlyph width="16" height="18" viewBox="0 0 16 18"><path fill="none" stroke="#fff" d="M11 1a3 3 0 1 0 .1 0zM1 17a5 5 0 0 1 6-7M5 6a2.500 2.500 0 1 0 .1 0"/></PeopleGlyph>
                        <FaChevronUp size={10}/>
                        <svg width="14" height="14" viewBox="0 0 14 14"><rect x="1" y="1" width="12" height="12" fill="#000" stroke="#fff"/><rect x="3" y="3" width="8" height="8" fill="#fff"/></svg>
                        <svg width="14" height="16" viewBox="0 0 14 16"><path fill="none" stroke="#bbb" d="M1 15a13 13 0 0 1 12-13M4 15a9 9 0 0 1 9-9M7 15a6 6 0 0 1 6-5"/></svg>
                        <svg width="15" height="16" viewBox="0 0 15 16"><path fill="none" stroke="#fff" d="M1 6h3l4-4v12l-4-4H1zM10 5a4 4 0 0 1 0 6M12 3a7 7 0 0 1 0 10"/></svg>
                        <span>ENG</span>
                        <ClockText>6:07 AM<br/>4/8/2020</ClockText>
                        <NotifyBadge/>
                    </TrayArea>
                </Taskbar>
            </Browser>
            <SecondScreen>
                <Taskbar>
                    <StartButton $w={47}><FaWindows size={16}/></StartButton>
                    <StartButton $w={48}><CortanaRing $size={16} $light/></StartButton>
                    <StartButton $w={52}><TaskViewIcon size={16}/></StartButton>
                    {slots.map((s, i) => (
                        <SlotItem key={i} $flush={s.flush}>
                            <SlotInner $active={s.active} $playing={s.playing} $mark={s.mark}>{s.icon}</SlotInner>
                        </SlotItem>
                    ))}
                    <TrayArea>
                        <ClockText>6:07 AM<br/>4/8/2020</ClockText>
                    </TrayArea>
                </Taskbar>
            </SecondScreen>
        </Wide>
    );
}

export default App;
